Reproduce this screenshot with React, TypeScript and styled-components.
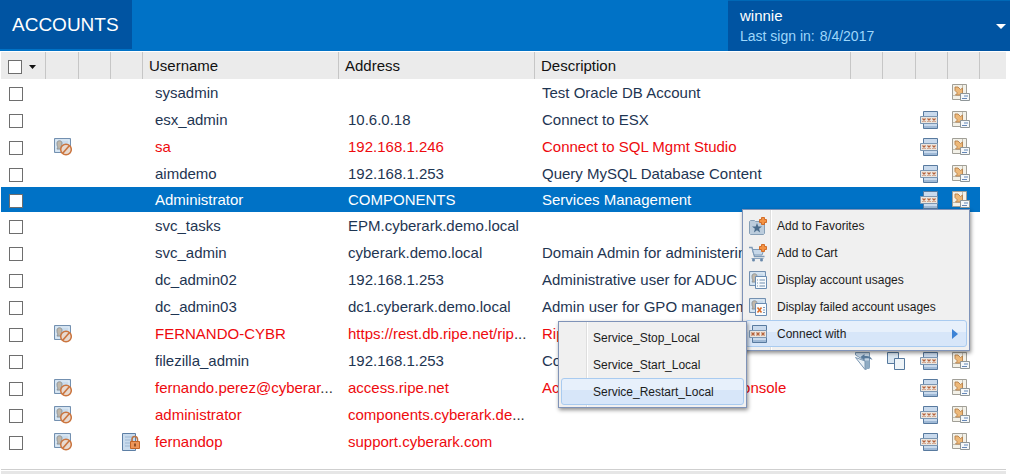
import React from "react";
import styled, { createGlobalStyle, css } from "styled-components";

const Global = createGlobalStyle`
  * { box-sizing: border-box; }
  body { margin: 0; background: #fff; font-family: "Liberation Sans", Arial, sans-serif; font-size: 15px; }
`;

const Header = styled.header`
  display: flex;
  justify-content: space-between;
  align-items: stretch;
  height: 51px;
  background: #0072c6;
`;
const Tab = styled.a`
  display: flex;
  align-items: center;
  height: 49px;
  padding: 0 13px 0 12px;
  background: #0054a2;
  color: #fff;
  font-size: 19px;
  text-decoration: none;
`;
const UserPanel = styled.div`
  display: flex;
  align-items: center;
  justify-content: space-between;
  width: 282px;
  padding: 0 4px 0 12px;
  border-top: 1px solid #0068b6;
  background: #0054a2;
  color: #fff;
`;
const UserName = styled.div`
  line-height: 21px;
`;
const SignIn = styled.div`
  display: flex;
  gap: 5px;
  font-size: 14px;
  line-height: 21px;
  color: #9ed7fb;
`;
const ArrowButton = styled.button`
  display: flex;
  padding: 0;
  border: 0;
  background: none;
  color: inherit;
`;

const Grid = styled.table`
  width: calc(100% - 4px);
  margin-top: 1px;
  padding-left: 1px;
  table-layout: fixed;
  border-collapse: separate;
  border-spacing: 0;
  color: #1e3552;
`;
const Col = styled.col<{ $w?: number }>`
  ${(p) => p.$w && `width: ${p.$w}px;`}
`;
const Th = styled.th<{ $last?: boolean }>`
  height: 27px;
  padding: 0 0 0 6px;
  border-right: ${(p) => (p.$last ? "0" : "1px solid #c6c6c6")};
  background: #ebebeb;
  color: #111;
  font-weight: normal;
  line-height: 17px;
  text-align: left;
`;
const SelectAll = styled.div`
  display: flex;
  align-items: center;
  gap: 7px;
  padding: 2px 0 0 1px;
`;
const Td = styled.td`
  height: 27px;
  padding: 0 0 1px 12px;
  line-height: 17px;
  white-space: nowrap;
  overflow: hidden;
`;
const DescTd = styled(Td)`
  padding-left: 7px;
`;
const AddrTd = styled(Td)`
  padding-left: 9px;
`;
const CheckTd = styled(Td)`
  padding: 3px 0 0 8px;
`;
const IconTd = styled(Td)`
  position: relative;
  padding: 0 0 0 11px;
  overflow: visible;
`;
const StatusTd = styled(IconTd)`
  padding-left: 8px;
`;
const ActionTd = styled(IconTd)`
  padding-left: 4px;
`;
const Ellipsis = styled.span`
  color: #333;
`;
const Row = styled.tr<{ $alert?: boolean; $selected?: boolean }>`
  ${(p) => p.$alert && css`color: #ee0a0e;`}
  ${(p) => p.$selected && css`
    color: #fff;
    ${Td} { height: 25px; }
    ${Td}:not(:last-child) { background: #0072c6; }
  `}
`;
const Check = styled.input`
  appearance: none;
  display: block;
  width: 14px;
  height: 14px;
  margin: 0;
  border: 1px solid #6e6e6e;
  background: #fff;
`;
const IconButton = styled.button`
  display: block;
  width: 18px;
  height: 18px;
  padding: 0;
  border: 0;
  background: none;
`;
const Svg = styled.svg`
  display: block;
  flex: none;
`;

const Menu = styled.ul`
  position: absolute;
  z-index: 2;
  margin: 0;
  padding: 2px;
  list-style: none;
  border: 1px solid #7f93b8;
  background: linear-gradient(to right, #f0f0f0 27px, #dedede 27px, #dedede 28px, #fff 28px, #fff 29px, #f0f0f0 29px);
  box-shadow: 1px 2px 4px rgba(0, 0, 0, 0.45);
  color: #1c1c1c;
`;
const ContextMenu = styled(Menu)`
  top: 22px;
  right: 10px;
  width: 228px;
  padding-bottom: 3px;
`;
const SubMenu = styled(Menu)`
  top: 1px;
  right: calc(100% - 2px);
  width: 189px;
`;
const MenuItem = styled.li`
  position: relative;
`;
const MenuButton = styled.button<{ $active?: boolean }>`
  display: flex;
  align-items: center;
  gap: 10px;
  width: 100%;
  height: 27px;
  padding: 0 8px 0 3px;
  border: 1px solid ${(p) => (p.$active ? "#a9cbf0" : "transparent")};
  border-radius: 3px;
  background: ${(p) => (p.$active ? "linear-gradient(#e7f0fb 45%, #d7e6f9 46%)" : "none")};
  color: inherit;
  font: 12px "Liberation Sans", Arial, sans-serif;
  text-align: left;
`;
const MenuLabel = styled.span`
  flex: 1;
`;
const IconGap = styled.span`
  width: 18px;
`;

const Footer = styled.footer`
  height: 5px;
  margin: 14px 4px 0 1px;
  border-top: 1px solid #cfcfcf;
  border-bottom: 3px solid #e6e6e6;
`;

const Caret = ({ w, h }: { w: number; h: number }) => (
  <Svg width={w} height={h} viewBox="0 0 10 5" preserveAspectRatio="none"><path d="M0 0h10L5 5z" fill="currentColor" /></Svg>
);
const Icon = ({ children }: { children: React.ReactNode }) => (
  <Svg width="18" height="18" viewBox="0 0 18 18" aria-hidden="true">{children}</Svg>
);
const ConnectIcon = () => (
  <Icon>
    <path d="M3.5.5h14v5h-14zM3.5 11.5h14v6h-14z" fill="#c9daed" stroke="#587a9f" />
    <path d="M4 16h13" stroke="#9fb9d6" strokeWidth="2" />
    <path d="M.5 5.5h17v7H.5z" fill="#ece6df" stroke="#7c97b3" />
    <path d="M2.500 7.500l3 3m0-3l-3 3M7.500 7.500l3 3m0-3l-3 3M12.500 7.500l3 3m0-3l-3 3" stroke="#b5633c" strokeWidth="1.200" />
  </Icon>
);
const DetailsIcon = () => (
  <Icon>
    <path d="M.5.5h14v15H.5z" fill="#f3f1e8" stroke="#a19f97" />
    <path d="M10.500 1v7M1 11.500h7" stroke="#bebcb2" />
    <path d="M3 3h3l2.500 2.500L10.500 4v7h-7l2-2L3 6.500z" fill="#edb878" stroke="#b58049" strokeWidth=".9" />
    <path d="M8.500 9.500h9v7h-9z" fill="#f5f8fa" stroke="#8f9698" />
    <path d="M12 12h4M10 14.500h5" stroke="#6587b8" strokeWidth="1.200" />
  </Icon>
);
const Card = () => (
  <>
    <path d="M.5.5h16v14H.5z" fill="#c9dbec" stroke="#7390b0" />
    <path d="M2 2h13v11H2z" fill="none" stroke="#e2edf6" />
    <path d="M3 5c0-3 5-3 5 0 0 2-1 3-1 4l1 2H3l1-2C3 8 3 7 3 5z" fill="#c1b8aa" stroke="#858b91" strokeWidth=".8" />
  </>
);
const DisabledIcon = () => (
  <Icon>
    <Card />
    <circle cx="12" cy="11.500" r="5.300" fill="#e8dad0" stroke="#cb753e" strokeWidth="1.500" />
    <path d="M8.500 15.500l7-8" stroke="#cb753e" strokeWidth="1.700" />
  </Icon>
);
const UsagesIcon = () => (
  <Icon>
    <Card />
    <path d="M6.500 5.500h11v12h-11z" fill="#f8fbfd" stroke="#6a8cb2" />
    <path d="M8 9h1M8 12h1M8 15h1M10.500 9H16M10.500 12H16M10.500 15H16" stroke="#6f8daf" />
  </Icon>
);
const FailedIcon = () => (
  <Icon>
    <Card />
    <path d="M6.500 5.500h11v12h-11z" fill="#f8fbfd" stroke="#6a8cb2" />
    <path d="M8.500 9.500l4 5m0-5l-4 5" stroke="#d86a28" strokeWidth="1.600" />
    <path d="M14 9.500h2M14 12h2M14 14.500h2" stroke="#7c98b8" />
  </Icon>
);
const Plus = () => (
  <path d="M12.500.500h3v2h2v3h-2v2h-3v-2h-2v-3h2z" fill="#f39343" stroke="#cf641d" strokeWidth=".9" />
);
const FavoriteIcon = () => (
  <Icon>
    <path d="M.500 4.500l1-1h4l1 1h9v12l-1 1h-13l-1-1z" fill="#bccddd" stroke="#869fb6" />
    <path d="M8 6l1.300 3.400 3.700.1-2.900 2.300 1 3.600L8 13.300l-3.100 2.100 1-3.600L3 9.500l3.700-.1z" fill="#4a6c8c" />
    <Plus />
  </Icon>
);
const CartIcon = () => (
  <Icon>
    <path d="M0 3.500h3l2.500 9h10" fill="none" stroke="#7e9ab7" strokeWidth="1.400" />
    <path d="M3.500 5.500h11.500l-2 5.500H5z" fill="#c6d7e8" stroke="#7e9ab7" />
    <path d="M2.500 14.500h12" stroke="#8ca5bf" />
    <circle cx="4.500" cy="16" r="1.500" fill="#6888aa" /><circle cx="12.500" cy="16" r="1.500" fill="#6888aa" />
    <Plus />
  </Icon>
);
const LockIcon = () => (
  <Icon>
    <path d="M.500.500h13v17H.500z" fill="#c9dbed" stroke="#5d7fa5" />
    <path d="M3 4h8M3 7h8M3 10h5M3 13h5" stroke="#9db7d2" />
    <path d="M10 9V6.500c0-4 5.500-4 5.500 0V9" fill="none" stroke="#b97343" strokeWidth="1.600" />
    <path d="M8.500 8.500h9v7h-9z" fill="#ee9558" stroke="#c26527" />
    <path d="M13 10.500v3" stroke="#7b3f18" strokeWidth="1.600" />
  </Icon>
);
const RetrieveIcon = () => (
  <Icon>
    <path d="M.5.5h14v15l-4 2V9L.5 3z" fill="#c3d4e3" stroke="#7b97b2" />
    <path d="M.5 5.500L10 9v8.500z" fill="#eaf1f6" stroke="#7b97b2" />
    <path d="M10.500 8.500h4V17h-4z" fill="#8fabc3" />
    <path d="M5.500 5l4-3v2c4.500-.5 6.500 1 8 4-2.500-1.500-4.500-2-8-1.500v2z" fill="#587a9b" />
  </Icon>
);
const CopyIcon = () => (
  <Icon>
    <path d="M.500.500h11v11H.500z" fill="#d9e6f1" stroke="#55789d" />
    <path d="M7.500 6.500h10v11h-10z" fill="#eef4f8" stroke="#55789d" />
  </Icon>
);

type Account = {
  user: string;
  address?: string;
  description?: string;
  alert?: boolean;
  selected?: boolean;
  locked?: boolean;
  files?: boolean;
  noConnect?: boolean;
};

const accounts: Account[] = [
  { user: "sysadmin", description: "Test Oracle DB Account", noConnect: true },
  { user: "esx_admin", address: "10.6.0.18", description: "Connect to ESX" },
  { user: "sa", address: "192.168.1.246", description: "Connect to SQL Mgmt Studio", alert: true },
  { user: "aimdemo", address: "192.168.1.253", description: "Query MySQL Database Content" },
  { user: "Administrator", address: "COMPONENTS", description: "Services Management", selected: true },
  { user: "svc_tasks", address: "EPM.cyberark.demo.local" },
  { user: "svc_admin", address: "cyberark.demo.local", description: "Domain Admin for administering" },
  { user: "dc_admin02", address: "192.168.1.253", description: "Administrative user for ADUC MMC" },
  { user: "dc_admin03", address: "dc1.cyberark.demo.local", description: "Admin user for GPO management" },
  { user: "FERNANDO-CYBR", address: "https://rest.db.ripe.net/rip...", description: "Ripe", alert: true },
  { user: "filezilla_admin", address: "192.168.1.253", description: "Connect", files: true },
  { user: "fernando.perez@cyberar...", address: "access.ripe.net", description: "Access to web management console", alert: true },
  { user: "administrator", address: "components.cyberark.de...", alert: true },
  { user: "fernandop", address: "support.cyberark.com", alert: true, locked: true },
];

const menuItems = [
  { label: "Add to Favorites", icon: <FavoriteIcon /> },
  { label: "Add to Cart", icon: <CartIcon /> },
  { label: "Display account usages", icon: <UsagesIcon /> },
  { label: "Display failed account usages", icon: <FailedIcon /> },
];
const services = ["Service_Stop_Local", "Service_Start_Local", "Service_Restart_Local"];

const Shortened = ({ text = "" }: { text?: string }) =>
  text.endsWith("...") ? <>{text.slice(0, -3)}<Ellipsis>...</Ellipsis></> : <>{text}</>;

const AccountMenu = () => (
  <ContextMenu>
    {menuItems.map((m) => (
      <MenuItem key={m.label}>
        <MenuButton>{m.icon}<MenuLabel>{m.label}</MenuLabel></MenuButton>
      </MenuItem>
    ))}
    <MenuItem>
      <MenuButton $active>
        <ConnectIcon />
        <MenuLabel>Connect with</MenuLabel>
        <Svg width="6" height="10"><path d="M0 0l6 5-6 5z" fill="#3c83d6" /></Svg>
      </MenuButton>
      <SubMenu>
        {services.map((s, i) => (
          <MenuItem key={s}>
            <MenuButton $active={i === 2}><IconGap /><MenuLabel>{s}</MenuLabel></MenuButton>
          </MenuItem>
        ))}
      </SubMenu>
    </MenuItem>
  </ContextMenu>
);

const columns = [45, 33, 32, 32, 196, 196, undefined, 32, 33, 32, 32, 26];
const titles = ["", "", "", "Username", "Address", "Description", "", "", "", "", ""];

export default function App() {
  return (
    <>
      <Global />
      <Header>
        <Tab href="#accounts">ACCOUNTS</Tab>
        <UserPanel>
          <div>
            <UserName>winnie</UserName>
            <SignIn><span>Last sign in:</span><span>8/4/2017</span></SignIn>
          </div>
          <ArrowButton aria-label="User menu"><Caret w={10} h={5} /></ArrowButton>
        </UserPanel>
      </Header>
      <Grid>
        <colgroup>{columns.map((w, i) => <Col key={i} $w={w} />)}</colgroup>
        <thead>
          <tr>
            <Th>
              <SelectAll>
                <Check type="checkbox" aria-label="Select all" />
                <ArrowButton aria-label="Selection options"><Caret w={7} h={4} /></ArrowButton>
              </SelectAll>
            </Th>
            {titles.map((t, i) => <Th key={i} $last={i === titles.length - 1}>{t}</Th>)}
          </tr>
        </thead>
        <tbody>
          {accounts.map((a) => (
            <Row key={a.user} $alert={a.alert} $selected={a.selected}>
              <CheckTd><Check type="checkbox" aria-label={`Select ${a.user}`} /></CheckTd>
              <StatusTd>{a.alert && <DisabledIcon />}</StatusTd>
              <IconTd />
              <IconTd>{a.locked && <LockIcon />}</IconTd>
              <Td><Shortened text={a.user} /></Td>
              <AddrTd><Shortened text={a.address} /></AddrTd>
              <DescTd>{a.description}</DescTd>
              <ActionTd>{a.files && <IconButton aria-label="Retrieve"><RetrieveIcon /></IconButton>}</ActionTd>
              <ActionTd>{a.files && <IconButton aria-label="Copy"><CopyIcon /></IconButton>}</ActionTd>
              <ActionTd>{!a.noConnect && <IconButton aria-label="Connect"><ConnectIcon /></IconButton>}</ActionTd>
              <ActionTd>
                <IconButton aria-label="Details"><DetailsIcon /></IconButton>
                {a.selected && <AccountMenu />}
              </ActionTd>
              <Td />
            </Row>
          ))}
        </tbody>
      </Grid>
      <Footer />
    </>
  );
}
